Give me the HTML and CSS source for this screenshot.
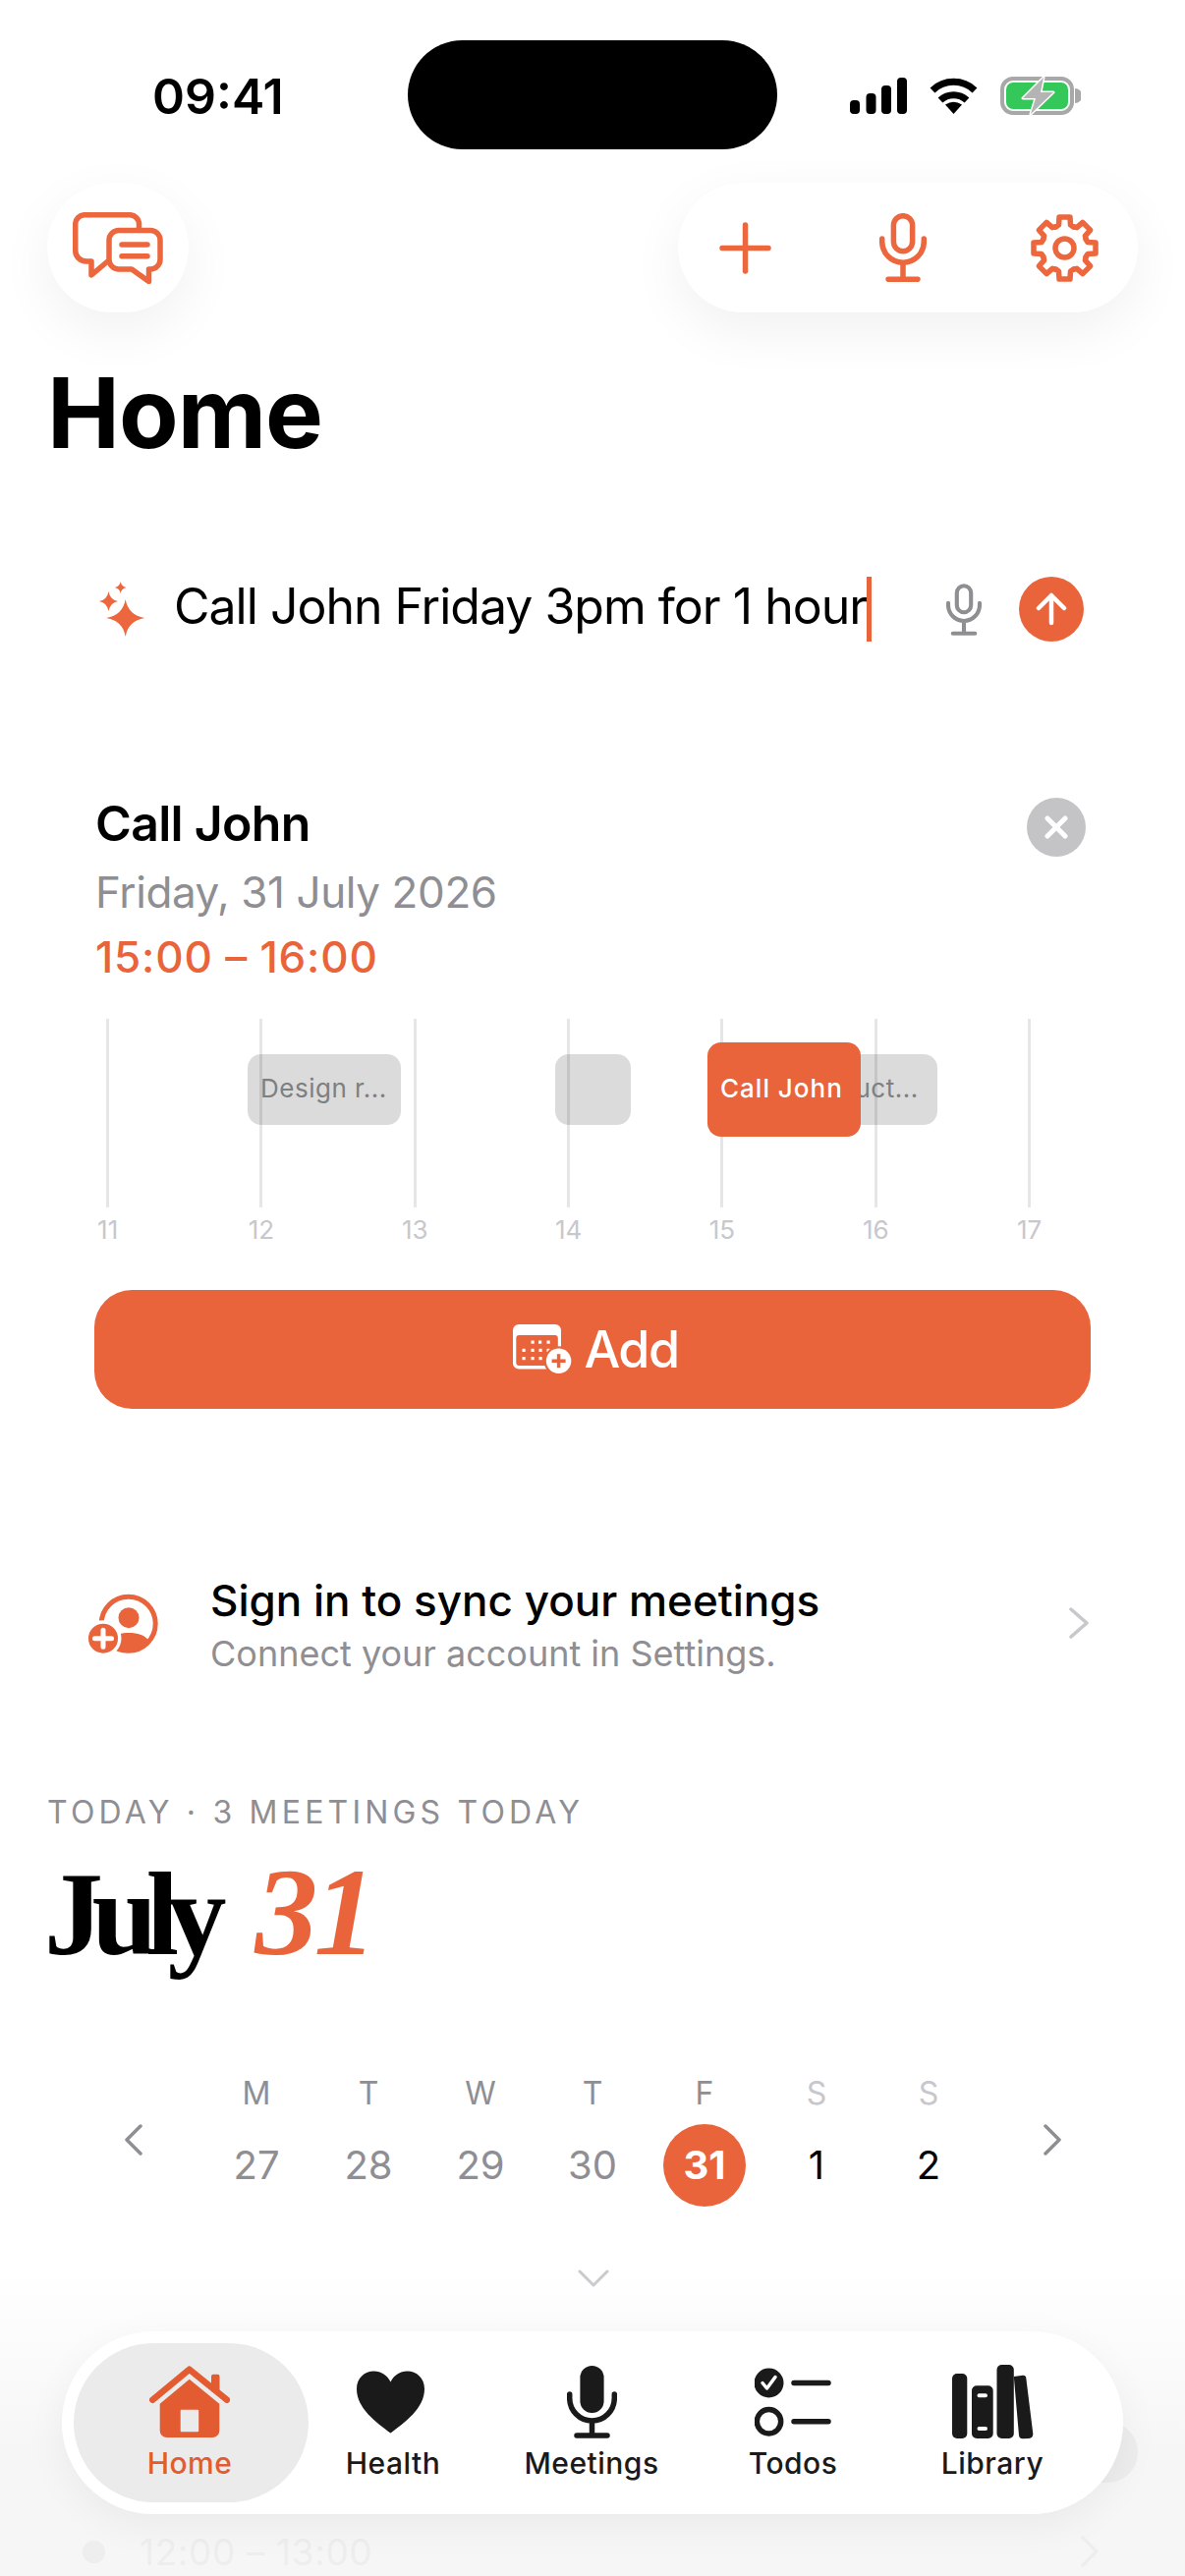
FILE: index.html
```html
<!DOCTYPE html>
<html lang="en">
<head>
<meta charset="utf-8">
<title>Home</title>
<link rel="stylesheet" href="styles.css">
</head>
<body>
<div class="screen">
  <div class="status">
    <div class="time-box"><span class="time">09:41</span></div>
    <div class="island"></div>
    <div class="status-icons">
      <svg width="58" height="37" viewBox="0 0 58 37"><rect x="0" y="23" width="10" height="14" rx="4"/><rect x="16.500" y="16" width="10" height="21" rx="4"/><rect x="32" y="8" width="10" height="29" rx="4"/><rect x="48" y="0" width="10" height="37" rx="4"/></svg>
      <svg width="51" height="37" viewBox="0 0 51 37"><path class="wifi" d="M4 13A31 31 0 0 1 47 13"/><path class="wifi" d="M12 23A20 20 0 0 1 39 23"/><path d="M25.500 37L17 27.500Q25.500 22 34 27.500Z"/></svg>
      <svg width="82" height="39" viewBox="0 0 82 39"><rect class="bat-out" x="2" y="2" width="71" height="35" rx="11"/><rect class="bat-in" x="6" y="6" width="63" height="27" rx="7"/><path class="bat-cap" d="M76 12a7 7 0 0 1 0 15Z"/><path class="bolt" d="M44 1L23 22H36L31 38L54 16H41Z"/></svg>
    </div>
  </div>

  <div class="header">
    <div class="round-btn chat-btn">
      <svg width="92" height="73" viewBox="0 0 92 73" class="line-icon"><path d="M67.500 16V12A9.500 9.500 0 0 0 58 2.700H12A9.500 9.500 0 0 0 2.700 12V39A11 11 0 0 0 13.700 50H19V64L35 50.500"/><path class="fill-white" d="M47 18.500H79A10 10 0 0 1 89 28.500V48A10 10 0 0 1 79 58H77.500V70.500L60 58H47A10 10 0 0 1 37 48V28.500A10 10 0 0 1 47 18.500Z"/><path d="M50 33H76M50 44.700H76"/></svg>
    </div>
    <div class="round-btn actions">
      <svg width="53" height="53" viewBox="0 0 53 53" class="line-icon"><path d="M26.500 3V50M3 26.500H50"/></svg>
      <svg width="48" height="70" viewBox="0 0 48 70" class="line-icon act-mic"><rect x="14.400" y="2.700" width="19.200" height="36" rx="9.600"/><path d="M2.700 26V29A21.300 21.300 0 0 0 45.300 29V26M24 50.500V67M9 67.300H39"/></svg>
      <svg width="69" height="69" viewBox="0 0 69 69" class="line-icon">
        <defs><path id="tooth" d="M25.500 12.800L28.500 11L29 3H40L40.500 11L43.500 12.800"/></defs>
        <use href="#tooth"/><use href="#tooth" transform="rotate(45 34.500 34.500)"/><use href="#tooth" transform="rotate(90 34.500 34.500)"/><use href="#tooth" transform="rotate(135 34.500 34.500)"/><use href="#tooth" transform="rotate(180 34.500 34.500)"/><use href="#tooth" transform="rotate(225 34.500 34.500)"/><use href="#tooth" transform="rotate(270 34.500 34.500)"/><use href="#tooth" transform="rotate(315 34.500 34.500)"/>
        <circle cx="34.500" cy="34.500" r="9.500"/>
      </svg>
    </div>
  </div>

  <h1 class="title">Home</h1>

  <div class="prompt">
    <svg class="sparkle" width="47" height="56" viewBox="0 0 47 56"><path d="M26.700 18Q29.500 34.200 46.200 37Q29.500 39.800 26.700 56Q23.900 39.800 7.200 37Q23.900 34.200 26.700 18Z"/><path d="M9.500 10Q11 18.500 19 20Q11 21.500 9.500 30Q8 21.500 0 20Q8 18.500 9.500 10Z"/><path d="M21.700 0Q22.500 5.200 27.700 6Q22.500 6.800 21.700 12Q20.900 6.800 15.700 6Q20.900 5.200 21.700 0Z"/></svg>
    <span class="prompt-text">Call John Friday 3pm for 1 hour</span>
    <span class="caret"></span>
    <svg class="prompt-mic" width="36" height="53" viewBox="0 0 48 70"><rect x="14.400" y="2.700" width="19.200" height="36" rx="9.600"/><path d="M2.700 26V29A21.300 21.300 0 0 0 45.300 29V26M24 50.500V67M9 67.300H39"/></svg>
    <div class="send"><svg width="34" height="34" viewBox="0 0 34 34"><path d="M17 31V4M4 16L17 3L30 16"/></svg></div>
  </div>

  <div class="event-head">
    <div>
      <div class="event-name">Call John</div>
      <div class="event-date">Friday, 31 July 2026</div>
      <div class="event-time">15:00 – 16:00</div>
    </div>
    <div class="close"><svg width="24" height="24" viewBox="0 0 24 24"><path d="M3 3L21 21M21 3L3 21"/></svg></div>
  </div>

  <div class="gantt">
    <div class="hours">
      <div class="hour"><i class="hour-line"></i><span>11</span></div>
      <div class="hour"><i class="hour-line"></i><span>12</span></div>
      <div class="hour"><i class="hour-line"></i><span>13</span></div>
      <div class="hour"><i class="hour-line"></i><span>14</span></div>
      <div class="hour"><i class="hour-line"></i><span>15</span></div>
      <div class="hour"><i class="hour-line"></i><span>16</span></div>
      <div class="hour"><i class="hour-line"></i><span>17</span></div>
    </div>
    <div class="block" style="left:252px;width:156px"><span>Design r...</span></div>
    <div class="block" style="left:565px;width:77px"></div>
    <div class="block" style="left:798px;width:156px"><span>Product...</span></div>
    <div class="block block-now" style="left:720px;width:156px"><span>Call John</span></div>
  </div>

  <div class="add-btn">
    <svg width="62" height="52" viewBox="0 0 62 52"><rect class="w" x="0" y="0" width="49" height="45.500" rx="6"/><rect class="o" x="3.300" y="11" width="42.500" height="31" rx="3"/>
      <g class="w"><rect x="18.500" y="16.500" width="3.200" height="3.200"/><rect x="26" y="16.500" width="3.200" height="3.200"/><rect x="34.500" y="16.500" width="3.200" height="3.200"/><rect x="9.500" y="24.800" width="3.200" height="3.200"/><rect x="18.500" y="24.800" width="3.200" height="3.200"/><rect x="26.500" y="24.800" width="3.200" height="3.200"/><rect x="34.500" y="24.800" width="3.200" height="3.200"/><rect x="9.500" y="33" width="3.200" height="3.200"/><rect x="18.500" y="33" width="3.200" height="3.200"/><rect x="26.500" y="33" width="3.200" height="3.200"/></g>
      <circle class="o" cx="46.600" cy="37.300" r="15"/><circle class="w" cx="46.600" cy="37.300" r="12.700"/><path class="add-plus" d="M39.600 37.300H53.600M46.600 30.300V44.300"/></svg>
    <span>Add</span>
  </div>

  <div class="signin">
    <svg class="signin-icon" width="72" height="62" viewBox="0 0 72 62"><circle class="ring" cx="40.700" cy="31.700" r="27.500"/><circle class="solid" cx="41" cy="25.700" r="10.500"/><path class="solid" d="M20 53C24 43 32 41 41 41C50 41 58 43 62 50A29 29 0 0 1 20 53Z"/><circle class="gap" cx="15" cy="46.700" r="18.500"/><circle class="solid" cx="15" cy="46.700" r="15"/><path class="badge-plus" d="M6.500 46.700H23.500M15 38.200V55.200"/></svg>
    <div class="signin-text">
      <div class="signin-title">Sign in to sync your meetings</div>
      <div class="signin-sub">Connect your account in Settings.</div>
    </div>
    <svg class="chev signin-chev" width="20" height="32" viewBox="0 0 20 32"><path d="M2 2L18 16L2 30"/></svg>
  </div>

  <div class="today">TODAY · 3 MEETINGS TODAY</div>
  <h2 class="month">July <em>31</em></h2>

  <div class="week">
    <svg class="chev-week" width="18" height="32" viewBox="0 0 18 32"><path d="M16 2L2 16L16 30"/></svg>
    <div class="dow">M</div><div class="dow">T</div><div class="dow">W</div><div class="dow">T</div><div class="dow">F</div><div class="dow dow-off">S</div><div class="dow dow-off">S</div>
    <svg class="chev-week chev-next" width="18" height="32" viewBox="0 0 18 32"><path d="M2 2L16 16L2 30"/></svg>
    <div class="day past">27</div><div class="day past">28</div><div class="day past">29</div><div class="day past">30</div><div class="day sel"><span>31</span></div><div class="day">1</div><div class="day">2</div>
  </div>

  <svg class="expand" width="32" height="18" viewBox="0 0 32 18"><path d="M2 2L16 16L30 2"/></svg>

  <div class="ghost-row">
    <i class="ghost-dot"></i>
    <span class="ghost-time">12:00 – 13:00</span>
    <svg class="ghost-chev" width="18" height="32" viewBox="0 0 18 32"><path d="M2 2L16 16L2 30"/></svg>
  </div>

  <div class="fade"></div>
  <div class="ghost-pill"></div>

  <nav class="tabbar">
    <div class="tab tab-on">
      <svg width="82" height="72" viewBox="0 0 82 72"><path class="home-body" d="M40.700 12.700L71.300 37.700V65A7 7 0 0 1 64.300 72H17.700A7 7 0 0 1 10.700 65V37.700Z"/><rect class="home-door" x="31.700" y="43.700" width="18.500" height="22.600" rx="1"/><rect class="home-body" x="63" y="7.700" width="8.500" height="18" rx="2"/><path class="home-roof" d="M3.300 33.700L40.700 2.700L79 33.700"/></svg>
      <span>Home</span>
    </div>
    <div class="tab">
      <svg class="heart" width="69" height="63" viewBox="0 0 69 63"><path d="M34.500 63C20 52 0 38 0 18C0 7 8 0 17.500 0C25 0 31 4 34.500 11C38 4 44 0 51.500 0C61 0 69 7 69 18C69 38 49 52 34.500 63Z"/></svg>
      <span>Health</span>
    </div>
    <div class="tab">
      <svg width="51" height="74" viewBox="0 0 51 74"><rect x="13.400" y="0" width="24.200" height="48" rx="12.100"/><path class="tab-line" d="M2.700 29V33A22.800 23 0 0 0 48.300 33V29M25.500 56V71M10 71H41"/></svg>
      <span>Meetings</span>
    </div>
    <div class="tab">
      <svg width="78" height="69" viewBox="0 0 78 69"><circle cx="14.500" cy="15" r="15"/><path class="todo-check" d="M8 15L12.500 20.500L21 9"/><circle class="tab-line" cx="14.500" cy="54.300" r="12.200"/><path class="tab-line" d="M40 15H75M40 54.300H75"/></svg>
      <span>Todos</span>
    </div>
    <div class="tab">
      <svg width="83" height="76" viewBox="0 0 83 76"><rect x="0" y="9" width="15.300" height="66" rx="5"/><path fill-rule="evenodd" d="M25 21.300H36.700A5 5 0 0 1 41.700 26.300V70A5 5 0 0 1 36.700 75H25A5 5 0 0 1 20 70V26.300A5 5 0 0 1 25 21.300ZM27.500 29.300A2 2 0 0 0 27.500 33.300H34A2 2 0 0 0 34 29.300ZM27.500 63A2 2 0 0 0 27.500 67H34A2 2 0 0 0 34 63Z"/><rect x="45.500" y="0" width="17.300" height="75" rx="5"/><path d="M62.800 12L72 10.700Q75 10.500 75.300 13.500L82.300 70Q82.600 74.500 78 75L72 75.200Q68.500 75.200 68 72Z"/></svg>
      <span>Library</span>
    </div>
  </nav>
</div>
</body>
</html>
```

FILE: styles.css
```css
* { box-sizing: border-box; }
html, body { margin: 0; padding: 0; background: #fff; }
body { font-family: Inter, "Liberation Sans", sans-serif; color: #000; }
svg { display: block; flex: none; }

.screen { position: relative; width: 1206px; height: 2622px; overflow: hidden; background: #fff; }

/* status bar */
.status { display: flex; align-items: center; height: 111px; margin-top: 41px; }
.time-box { width: 415px; padding: 3px 0 0 155px; }
.time { font-size: 50px; font-weight: 600; line-height: 60px; display: block; }
.island { width: 376px; height: 111px; border-radius: 56px; background: #000; }
.status-icons { display: flex; align-items: center; gap: 22px; padding: 2px 0 0 74px; }
.wifi { fill: none; stroke: #000; stroke-width: 7; }
.bat-out { fill: none; stroke: #a8a8a8; stroke-width: 4; }
.bat-in { fill: #34c759; }
.bat-cap { fill: #a8a8a8; }
.bolt { fill: #b4b4b4; stroke: #fff; stroke-width: 3; paint-order: stroke; stroke-linejoin: round; }

/* header */
.header { display: flex; justify-content: space-between; margin-top: 34px; padding: 0 48px; }
.round-btn { display: flex; align-items: center; height: 132px; border-radius: 66px; background: #fff; box-shadow: 0 18px 56px rgba(0, 0, 0, .06); }
.chat-btn { width: 144px; justify-content: center; }
.actions { width: 468px; padding-left: 42px; gap: 108px; }
.act-mic { margin: 0 -2px 0 2px; }
.line-icon { fill: none; stroke: #ec673d; stroke-width: 5.5; stroke-linecap: round; stroke-linejoin: round; }
.fill-white { fill: #fff; }

.title { margin: 52px 0 0 48px; font-size: 99px; font-weight: 700; line-height: 100px; letter-spacing: -1px; }

/* prompt */
.prompt { display: flex; align-items: center; height: 66px; margin-top: 117px; padding-left: 101px; }
.sparkle { fill: #ec673d; }
.prompt-text { width: 705px; margin-left: 29px; padding-bottom: 6px; font-size: 50px; line-height: 60px; letter-spacing: -1px; white-space: nowrap; }
.caret { width: 5px; height: 66px; background: #e9643b; }
.prompt-mic { margin-left: 76px; fill: none; stroke: #8e8e93; stroke-width: 5.500; stroke-linecap: round; }
.send { display: flex; align-items: center; justify-content: center; width: 66px; height: 66px; margin-left: 38px; border-radius: 50%; background: #e9643b; }
.send svg { fill: none; stroke: #fff; stroke-width: 4.500; stroke-linecap: round; stroke-linejoin: round; }

/* event */
.event-head { display: flex; justify-content: space-between; align-items: flex-start; margin-top: 159px; padding: 0 101px 0 97px; }
.event-name { font-size: 50px; font-weight: 600; line-height: 53px; margin-bottom: 10px; letter-spacing: -.7px; }
.event-date { font-size: 44px; line-height: 66px; color: #8e8e93; letter-spacing: -.4px; }
.event-time { font-size: 44px; line-height: 66px; font-weight: 500; color: #e9643b; letter-spacing: .8px; }
.close { display: flex; align-items: center; justify-content: center; width: 60px; height: 60px; border-radius: 50%; background: #c4c4c6; }
.close svg { fill: none; stroke: #fff; stroke-width: 5; stroke-linecap: round; }

/* gantt */
.gantt { position: relative; margin-top: 30px; }
.hours { display: grid; grid-template-columns: repeat(7, 156.33px); margin-left: 31.5px; }
.hour { display: flex; flex-direction: column; align-items: center; font-size: 26px; line-height: 45px; color: #c7c7cc; }
.hour-line { display: block; width: 3px; height: 192px; background: #e6e6e6; }
.block { position: absolute; top: 36px; height: 72px; padding-left: 13px; border-radius: 14px; background: rgba(0, 0, 0, .14); color: #7f7f7f; font-size: 26px; line-height: 70px; letter-spacing: .5px; white-space: nowrap; overflow: hidden; }
.block-now { top: 24px; height: 96px; padding-left: 13px; background: #e9643b; color: #fff; font-weight: 500; line-height: 94px; letter-spacing: 1px; }

.add-btn { display: flex; align-items: center; justify-content: center; gap: 10px; width: 1014px; height: 121px; margin: 39px 0 0 96px; padding-left: 7px; border-radius: 38px; background: #e9643b; color: #fff; font-size: 52px; font-weight: 500; letter-spacing: -1.5px; }
.add-btn .w { fill: #fff; }
.add-btn .o { fill: #e9643b; }
.add-plus { stroke: #e9643b; stroke-width: 3.500; fill: none; }

/* sign in */
.signin { display: flex; align-items: center; margin-top: 171px; padding: 0 98px 0 90px; }
.signin-icon { margin: 0 52px 10px 0; }
.ring { fill: none; stroke: #e9643b; stroke-width: 5; }
.solid { fill: #e9643b; }
.gap { fill: #fff; }
.badge-plus { fill: none; stroke: #fff; stroke-width: 5; stroke-linecap: round; }
.signin-title { font-size: 44px; font-weight: 500; line-height: 48px; }
.signin-sub { margin-top: 4px; font-size: 36px; line-height: 52px; color: #8e8e93; }
.chev { fill: none; stroke: #c7c7cc; stroke-width: 3.500; stroke-linecap: round; stroke-linejoin: round; }
.signin-chev { margin: 0 0 11px auto; }

/* date */
.today { margin: 116px 0 0 48px; font-size: 32px; line-height: 40px; letter-spacing: 4.200px; color: #8e8e93; }
.month { height: 130px; margin: 16px 0 0 45px; font-family: "Liberation Serif", serif; font-size: 120px; font-weight: 700; line-height: 130px; letter-spacing: -11.500px; }
.month em { margin-left: 22px; font-size: 128px; color: #e9643b; letter-spacing: -4px; }

.week { display: grid; grid-template-columns: 77px repeat(7, 114px) 78px; margin: 93px 0 0 127px; width: 953px; }
.chev-week { grid-row: span 2; align-self: center; margin-top: 6px; fill: none; stroke: #8e8e93; stroke-width: 3.500; stroke-linecap: round; stroke-linejoin: round; }
.chev-next { justify-self: end; }
.dow { height: 58px; font-size: 32px; line-height: 54px; text-align: center; color: #8e8e93; }
.dow-off { color: #c7c7cc; }
.day { display: flex; align-items: center; justify-content: center; height: 84px; font-size: 40px; line-height: 84px; }
.past { color: #8e8e93; }
.sel span { display: block; width: 84px; height: 84px; border-radius: 50%; background: #e9643b; color: #fff; font-weight: 700; text-align: center; }

.expand { margin: 64px 0 0 588px; fill: none; stroke: #c7c7cc; stroke-width: 3; stroke-linecap: round; stroke-linejoin: round; }

/* under the bar */
.ghost-row { display: flex; align-items: center; margin-top: 253px; padding: 0 88px 0 84px; height: 32px; }
.ghost-dot { width: 23px; height: 23px; border-radius: 50%; background: #dedede; }
.ghost-time { margin-left: 35px; font-size: 37px; color: #dedede; letter-spacing: .6px; }
.ghost-chev { margin-left: auto; fill: none; stroke: #dedede; stroke-width: 3.500; stroke-linecap: round; stroke-linejoin: round; }

.fade { position: absolute; left: 0; right: 0; top: 2300px; bottom: 0; background: linear-gradient(to bottom, rgba(243, 243, 243, 0), rgba(243, 243, 243, .75) 60%, rgba(243, 243, 243, .75)); }
.ghost-pill { position: absolute; left: 920px; top: 2465px; width: 238px; height: 62px; border-radius: 31px; background: #ededed; }

/* tab bar */
.tabbar { position: absolute; left: 63px; top: 2373px; display: grid; grid-template-columns: 204px 210px 194px 216px 190px; width: 1080px; height: 186px; padding: 12px 0 0 28px; border-radius: 93px; background: rgba(255, 255, 255, .97); box-shadow: 0 12px 40px rgba(0, 0, 0, .05); }
.tab { position: relative; display: flex; flex-direction: column; align-items: center; color: #1a1a1a; fill: #1a1a1a; }
.tab svg { position: relative; height: 76px; margin-top: 22px; }
.tab .heart { margin-left: -5px; }
.tab span { position: absolute; top: 102px; font-size: 30px; font-weight: 500; line-height: 40px; letter-spacing: .5px; white-space: nowrap; }
.tab-on { color: #e35b30; }
.tab-on::before { content: ""; position: absolute; left: -16px; right: -19px; top: 0; height: 162px; border-radius: 81px; background: #ebebeb; }
.home-body { fill: #e35b30; }
.home-door { fill: #ebebeb; }
.home-roof { fill: none; stroke: #e35b30; stroke-width: 6.500; stroke-linecap: round; stroke-linejoin: round; }
.tab-line { fill: none; stroke: #1a1a1a; stroke-width: 5.500; stroke-linecap: round; }
.todo-check { fill: none; stroke: #fff; stroke-width: 3.500; stroke-linecap: round; stroke-linejoin: round; }
```
